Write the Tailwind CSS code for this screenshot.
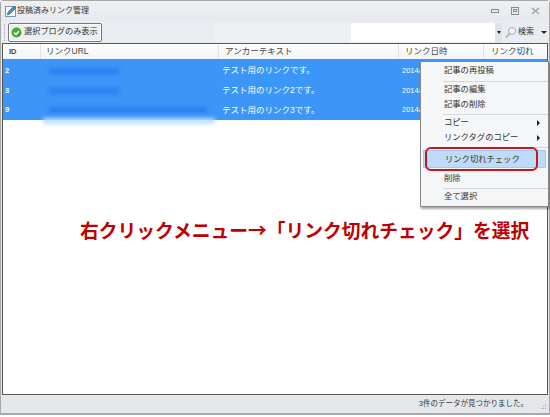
<!DOCTYPE html>
<html><head><meta charset="utf-8"><script src="https://cdn.jsdelivr.net/npm/@tailwindcss/browser@4"></script></head>
<body class="w-[550px] h-[417px] overflow-hidden bg-white font-['Liberation_Sans','Noto_Sans_CJK_JP',sans-serif] text-[8px] text-[#333]">
<div class="relative h-[415px] flex flex-col bg-[#e4e7ec] border border-[#a8a8a8] rounded-t-[3px]">
  <div class="h-[20px] shrink-0 flex items-center pl-[3px] bg-gradient-to-b from-[#eef0f3] to-[#e6e9ee]">
    <svg width="13" height="14" viewBox="0 0 13 14" class="mr-[0px] shrink-0"><rect x="1.5" y="2.5" width="10" height="10" fill="#fff" stroke="#7a94ac"/><path d="M3 11l1-3 6-6 2 2-6 6z" fill="#3f8fc4" stroke="#2a5f88" stroke-width=".5"/></svg>
    <span class="text-[8px] whitespace-nowrap">投稿済みリンク管理</span>
    <div class="ml-auto flex items-center gap-[12px] pr-[9px]">
      <svg width="8" height="5" viewBox="0 0 8 5"><rect x=".5" y=".5" width="7" height="3" fill="none" stroke="#8a8a8a"/></svg>
      <svg width="8" height="8" viewBox="0 0 8 8"><rect x=".5" y=".5" width="7" height="7" fill="none" stroke="#8a8a8a"/><rect x="2.5" y="2.5" width="3" height="2" fill="none" stroke="#8a8a8a"/></svg>
      <svg width="9" height="8" viewBox="0 0 9 8"><path d="M1 1l7 6M8 1L1 7" stroke="#a4a4a4" stroke-width="1.6"/></svg>
    </div>
  </div>
  <div class="h-[22px] shrink-0 flex items-center pl-[3px] bg-[#e9ecf0]">
    <div class="w-[2px] h-[17px] mr-[2px] border-l border-dotted border-[#aaa] shrink-0"></div>
    <div class="h-[19px] w-[94px] shrink-0 flex items-center gap-[2px] pl-[2px] border border-[#777] rounded-[2px] bg-[#eceef0] shadow-[inset_0_0_0_1px_#fff]">
      <svg width="11" height="11" viewBox="0 0 11 11" class="shrink-0"><circle cx="5.5" cy="5.5" r="5" fill="#49a83a"/><path d="M3 5.5l2 2 3-3.5" stroke="#fff" stroke-width="1.3" fill="none"/></svg>
      <span class="text-[8.2px] whitespace-nowrap">選択ブログのみ表示</span>
    </div>
    <div class="ml-[113px] w-[136px] h-[19px] bg-[#eef0f3] shrink-0"></div>
    <div class="w-[144px] h-[19px] bg-white shrink-0"></div>
    <div class="w-[7px] h-[19px] bg-[#dfe2e6] flex items-center justify-center shrink-0"><span class="block border-x-[2px] border-t-[3px] border-x-transparent border-t-[#222]"></span></div>
    <svg width="13" height="13" viewBox="0 0 13 13" class="ml-[2px] shrink-0"><circle cx="8" cy="5" r="3.5" fill="#f4f6f8" stroke="#a4acb4"/><path d="M5.5 7.5L2 11.5" stroke="#b8a878" stroke-width="1.5"/></svg>
    <span class="ml-[1px] text-[8px] whitespace-nowrap">検索</span>
    <span class="ml-[7px] block border-x-[3px] border-t-[3px] border-x-transparent border-t-[#222]"></span>
  </div>
  <div class="relative flex-1 flex flex-col mx-[1px] border border-[#555] bg-white min-h-0">
    <div class="h-[15px] flex items-center bg-gradient-to-b from-white to-[#f1f3f6] text-[#444] shrink-0">
      <div class="w-[38px] pl-[6px] h-full flex items-center border-r border-[#e0e3e8] font-bold text-[7.5px]">ID</div>
      <div class="w-[178px] pl-[5px] h-full flex items-center border-r border-[#e0e3e8] text-[8.5px]">リンクURL</div>
      <div class="w-[180px] pl-[6px] h-full flex items-center border-r border-[#e0e3e8] text-[8.5px]">アンカーテキスト</div>
      <div class="w-[85px] pl-[6px] h-full flex items-center border-r border-[#e0e3e8] text-[8.5px]">リンク日時</div>
      <div class="flex-1 pl-[7px] h-full flex items-center text-[8.5px]">リンク切れ</div>
    </div>
    <div class="h-[61px] flex flex-col bg-[#3b96f8] text-white shrink-0">
      <div class="h-[21px] pt-[2px] flex items-center">
        <div class="w-[38px] pl-[2px] font-bold text-[7.5px]">2</div>
        <div class="w-[178px] pl-[8px]"><div class="w-[70px] h-[6px] bg-[#2a80f0] blur-[2px]"></div></div>
        <div class="w-[180px] pl-[3px] text-[8.5px]">テスト用のリンクです。</div>
        <div class="pl-[3px] text-[7.5px]">2014/</div>
      </div>
      <div class="h-[20px] pt-[1px] flex items-center">
        <div class="w-[38px] pl-[2px] font-bold text-[7.5px]">3</div>
        <div class="w-[178px] pl-[8px]"><div class="w-[70px] h-[6px] bg-[#2a80f0] blur-[2px]"></div></div>
        <div class="w-[180px] pl-[3px] text-[8.5px]">テスト用のリンク2です。</div>
        <div class="pl-[3px] text-[7.5px]">2014/</div>
      </div>
      <div class="h-[20px] flex items-center">
        <div class="w-[38px] pl-[2px] font-bold text-[7.5px]">9</div>
        <div class="w-[178px] pl-[8px]"><div class="w-[158px] h-[6px] bg-[#2a80f0] blur-[2px]"></div></div>
        <div class="w-[180px] pl-[3px] text-[8.5px]">テスト用のリンク3です。</div>
        <div class="pl-[3px] text-[7.5px]">2014/</div>
      </div>
    </div>
    <div class="absolute left-[40px] top-[74px] w-[172px] h-[6px] bg-[#bcdcff] blur-[2px]"></div>
    <div class="flex-1 bg-white"></div>
  </div>
  <div class="relative h-[19px] shrink-0 flex items-center justify-end pr-[21px] bg-[#e4e7ec] text-[7.5px] border-b border-[#a8a8a8]">3件のデータが見つかりました。
    <svg width="8" height="8" viewBox="0 0 8 8" class="absolute right-[2px] bottom-[2px]"><path d="M6 1h1v1H6zM4 3h1v1H4zM6 3h1v1H6zM2 5h1v1H2zM4 5h1v1H4zM6 5h1v1H6z" fill="#a6a9ae"/></svg>
  </div>

  <div class="absolute left-[419px] top-[60px] w-[129px] h-[146px] bg-[#f5f6f7] border border-[#888] shadow-[1px_2px_2px_rgba(0,0,0,.35)] text-[8.3px] text-[#333]">
    <div class="h-[17px] pl-[23px] flex items-center">記事の再投稿</div>
    <div class="ml-[22px] h-px bg-[#d4d6d9] mt-[2px]"></div>
    <div class="h-[15px] pl-[23px] flex items-center">記事の編集</div>
    <div class="h-[15px] pl-[23px] flex items-center">記事の削除</div>
    <div class="ml-[22px] h-px bg-[#d4d6d9] mt-[2px]"></div>
    <div class="h-[15px] pl-[23px] pr-[8px] flex items-center justify-between">コピー<span class="block border-y-[3px] border-l-[3px] border-y-transparent border-l-[#222]"></span></div>
    <div class="h-[15px] pl-[23px] pr-[8px] flex items-center justify-between">リンクタグのコピー<span class="block border-y-[3px] border-l-[3px] border-y-transparent border-l-[#222]"></span></div>
    <div class="ml-[22px] h-px bg-[#d4d6d9] mt-[2px] mb-[2px]"></div>
    <div class="mx-[2px] h-[18px] pl-[21px] flex items-center bg-[#bcdcfa] border border-[#a5c8ea]">リンク切れチェック</div>
    <div class="h-[15px] mt-[3px] pl-[23px] flex items-center">削除</div>
    <div class="ml-[22px] h-px bg-[#d4d6d9] mt-[2px]"></div>
    <div class="h-[15px] pl-[23px] flex items-center">全て選択</div>
  </div>
  <div class="absolute left-[424px] top-[146px] w-[113px] h-[24px] border-2 border-[#c4161c] rounded-[6px]"></div>
  <div class="absolute left-[79px] top-[216px] text-[18.75px] leading-[26px] font-bold font-['Noto_Sans_CJK_JP',sans-serif] text-[#c00000] whitespace-nowrap">右クリックメニュー→「リンク切れチェック」を選択</div>
</div>
</body></html>
